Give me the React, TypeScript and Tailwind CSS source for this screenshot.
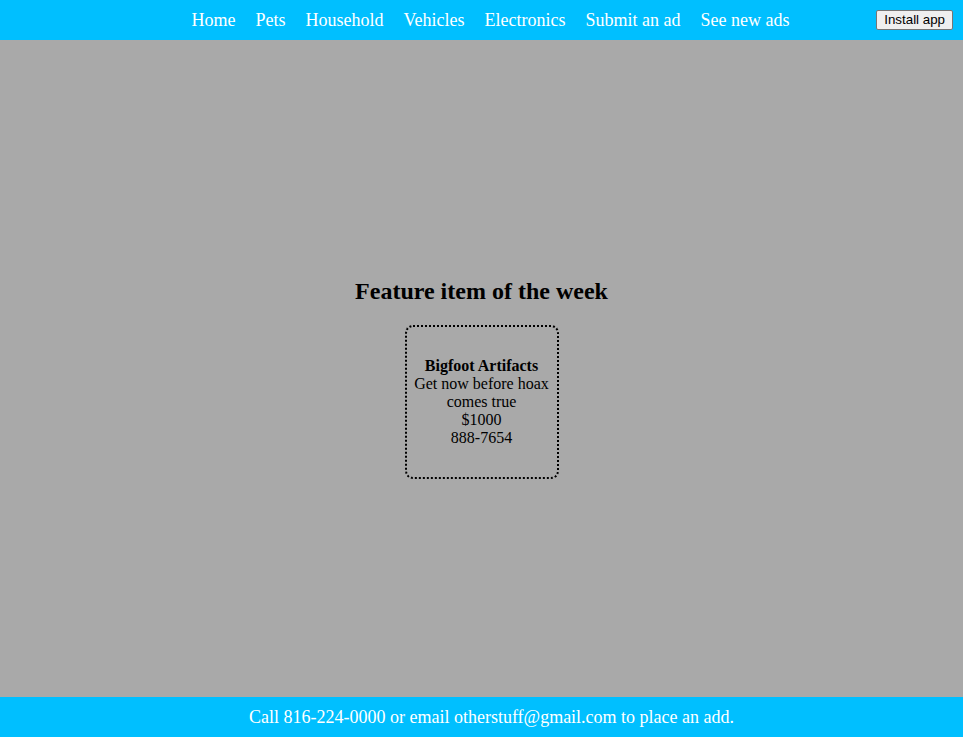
export default function App() {
  const links = ["Home", "Pets", "Household", "Vehicles", "Electronics", "Submit an ad", "See new ads"]

  return (
    <div className="flex flex-col h-[737px] bg-[#a9a9a9] font-['Liberation_Serif',serif]">
      <header className="relative h-10 bg-[#00bfff] flex items-center justify-center pl-5">
        <nav className="flex gap-5 text-[18px] text-white -ml-[2px]">
          {links.map((link) => (
            <a key={link} href="#" className="no-underline">
              {link}
            </a>
          ))}
        </nav>
        <button className="absolute right-[10px] top-[10px] h-5 px-[7px] text-[13.33px] leading-none font-['Liberation_Sans',Arial,sans-serif] bg-[#efefef] text-black border border-[#767676] rounded-[2px]">
          Install app
        </button>
      </header>

      <main className="flex-1 flex flex-col items-center justify-center pt-[14px]">
        <h2 className="text-[24px] font-bold text-black mb-[16px]">Feature item of the week</h2>
        <div className="w-[154px] h-[154px] border-2 border-dotted border-black rounded-lg flex flex-col items-center justify-center px-1 text-center text-[16px] leading-[18px] text-black">
          <b>Bigfoot Artifacts</b>
          <span>Get now before hoax comes true</span>
          <span>$1000</span>
          <span>888-7654</span>
        </div>
      </main>

      <footer className="h-10 bg-[#00bfff] flex items-center justify-center pl-5 text-[18px] text-white">
        Call 816-224-0000 or email otherstuff@gmail.com to place an add.
      </footer>
    </div>
  )
}
